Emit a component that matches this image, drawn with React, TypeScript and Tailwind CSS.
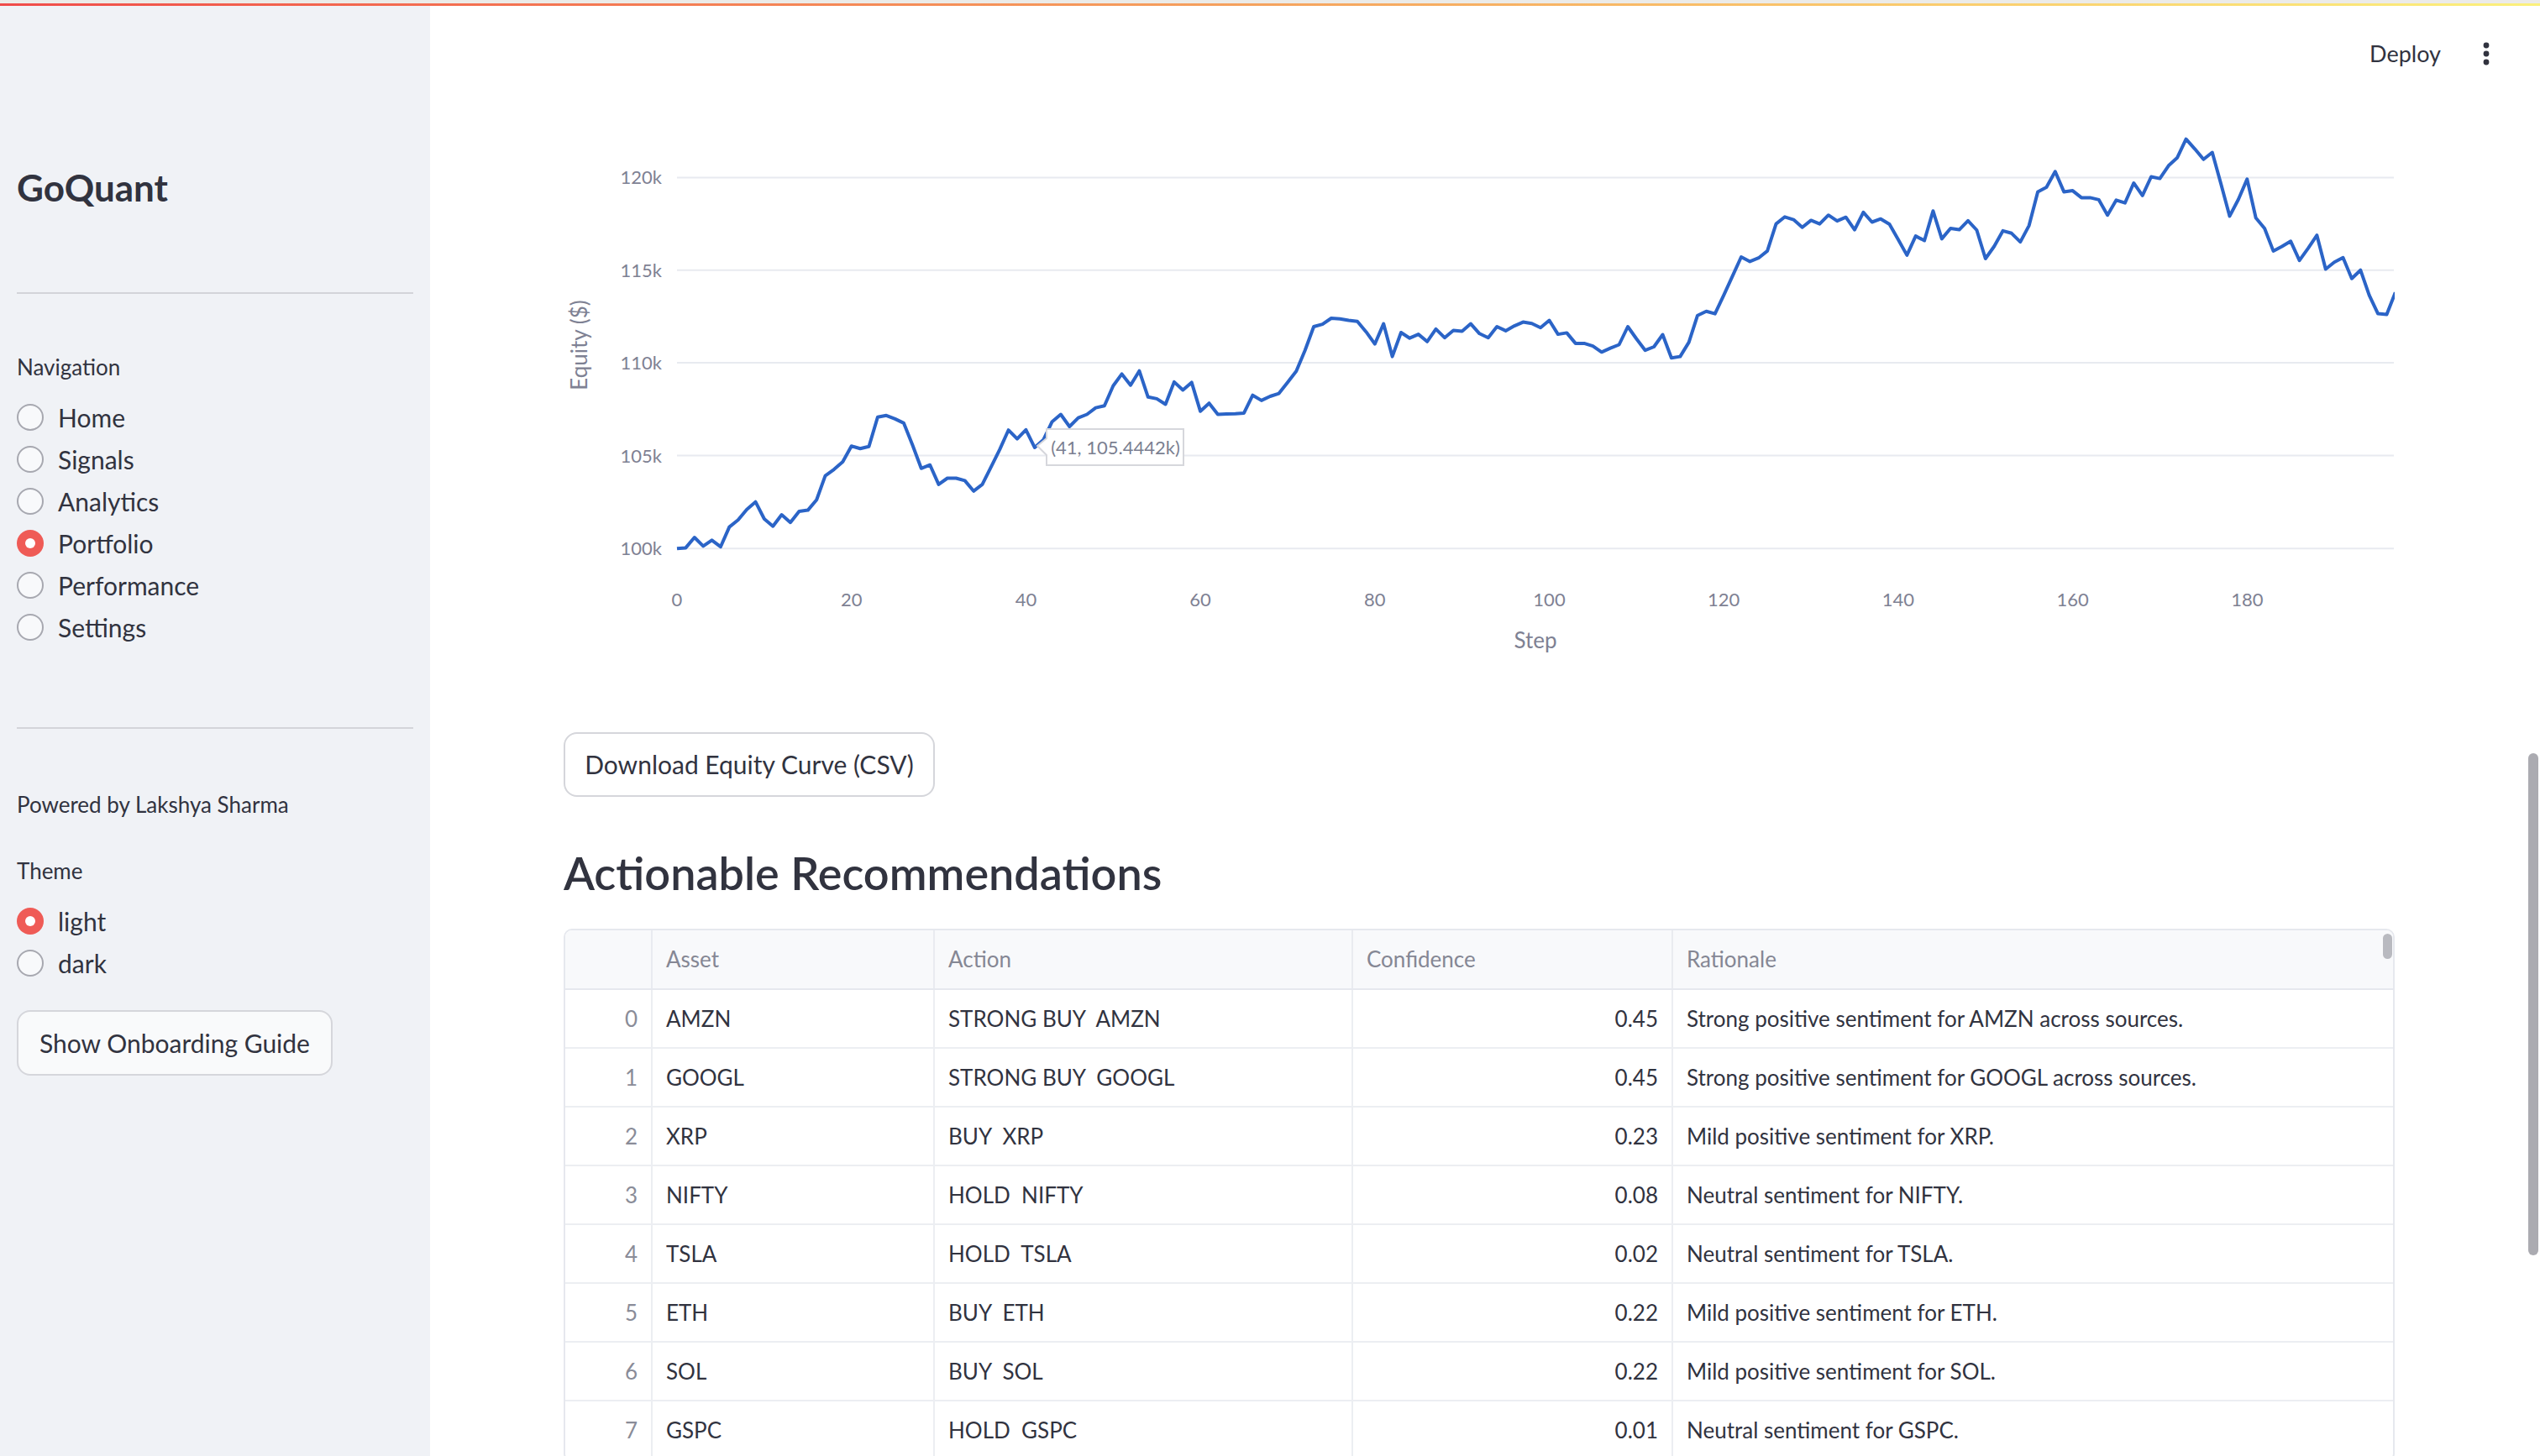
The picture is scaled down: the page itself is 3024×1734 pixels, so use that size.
import React from "react";

const navItems = ["Home", "Signals", "Analytics", "Portfolio", "Performance", "Settings"];

const rows = [
  { asset: "AMZN", action: "STRONG BUY  AMZN", conf: "0.45", why: "Strong positive sentiment for AMZN across sources." },
  { asset: "GOOGL", action: "STRONG BUY  GOOGL", conf: "0.45", why: "Strong positive sentiment for GOOGL across sources." },
  { asset: "XRP", action: "BUY  XRP", conf: "0.23", why: "Mild positive sentiment for XRP." },
  { asset: "NIFTY", action: "HOLD  NIFTY", conf: "0.08", why: "Neutral sentiment for NIFTY." },
  { asset: "TSLA", action: "HOLD  TSLA", conf: "0.02", why: "Neutral sentiment for TSLA." },
  { asset: "ETH", action: "BUY  ETH", conf: "0.22", why: "Mild positive sentiment for ETH." },
  { asset: "SOL", action: "BUY  SOL", conf: "0.22", why: "Mild positive sentiment for SOL." },
  { asset: "GSPC", action: "HOLD  GSPC", conf: "0.01", why: "Neutral sentiment for GSPC." },
];

// equity curve, traced off the plot (pixel rows, 2.41 per page px)
const curve = [
  1237, 1235, 1205, 1230, 1213, 1232, 1175, 1155, 1125, 1103, 1152, 1173, 1140, 1162, 1130, 1127, 1097, 1028, 1010, 988,
  943, 950, 944, 860, 855, 865, 877, 940, 1007, 997, 1053, 1035, 1035, 1042, 1072, 1053, 1003, 953, 897, 922,
  896, 947, 925, 873, 852, 887, 862, 852, 833, 827, 770, 736, 768, 727, 802, 807, 823, 759, 782, 760,
  843, 820, 852, 851, 850, 848, 797, 812, 800, 792, 760, 728, 668, 600, 593, 576, 578, 582, 585, 615,
  650, 592, 686, 617, 633, 622, 643, 607, 632, 611, 613, 592, 620, 632, 600, 612, 598, 587, 591, 603,
  582, 622, 618, 648, 648, 656, 673, 662, 652, 600, 635, 668, 658, 623, 690, 686, 645, 568, 556, 563,
  510, 455, 400, 413, 403, 383, 305, 285, 293, 315, 295, 305, 280, 297, 286, 322, 272, 300, 291, 306,
  350, 395, 340, 353, 268, 348, 318, 322, 296, 323, 405, 370, 325, 332, 357, 310, 213, 200, 155, 213,
  210, 230, 230, 236, 280, 237, 245, 188, 224, 170, 175, 138, 115, 62, 90, 120, 100, 190, 283, 235,
  177, 288, 318, 383, 370, 355, 410, 375, 338, 435, 415, 402, 462, 438, 510, 563, 565, 502,
];

const linePoints = curve.map((p, i) => `${(806 + i * 10.385).toFixed(1)},${(140 + p / 2.41).toFixed(1)}`).join(" ");

const yTicks = [
  { label: "120k", y: 211.4 },
  { label: "115k", y: 321.7 },
  { label: "110k", y: 432.1 },
  { label: "105k", y: 542.5 },
  { label: "100k", y: 653.3 },
];

const xTicks = [0, 20, 40, 60, 80, 100, 120, 140, 160, 180];

function Radio({ label, checked }: { label: string; checked?: boolean }) {
  return (
    <div className="flex h-[50px] items-center gap-[17px]">
      {checked ? (
        <span className="flex h-[32px] w-[32px] items-center justify-center rounded-full bg-[#ef5b56]">
          <span className="h-[12px] w-[12px] rounded-full bg-white" />
        </span>
      ) : (
        <span className="h-[32px] w-[32px] rounded-full border-2 border-[#a7a8b0] bg-[#f8f9fb]" />
      )}
      <span className="text-[30px] leading-[50px]">{label}</span>
    </div>
  );
}

function EquityChart() {
  return (
    <svg width="2180" height="679" viewBox="671 121 2180 679" className="block shrink-0">
      {yTicks.map((t) => (
        <g key={t.label}>
          <line x1="806" x2="2850" y1={t.y} y2={t.y} stroke="#e8eaf0" strokeWidth="2" />
          <text x="788" y={t.y + 8} textAnchor="end" fontSize="22" fill="#7e8193">
            {t.label}
          </text>
        </g>
      ))}
      {xTicks.map((v) => (
        <text key={v} x={806 + v * 10.385} y="722" textAnchor="middle" fontSize="22" fill="#7e8193">
          {v}
        </text>
      ))}
      <text x="1828" y="772" textAnchor="middle" fontSize="26" fill="#7e8193">
        Step
      </text>
      <text x="699" y="411" textAnchor="middle" fontSize="26" fill="#7e8193" transform="rotate(-90 699 411)">
        Equity ($)
      </text>
      <polyline points={linePoints} fill="none" stroke="#2b64c7" strokeWidth="4" strokeLinejoin="round" />
      <path d="M1235,531 L1246,522 V511 H1409 V554 H1246 V542 Z" fill="#ffffff" stroke="#d6d7dc" strokeWidth="2" />
      <text x="1328" y="541" textAnchor="middle" fontSize="22" fill="#7b7f91">
        (41, 105.4442k)
      </text>
    </svg>
  );
}

function RecommendationsTable() {
  const cols = "grid grid-cols-[102px_336px_498px_381px_1fr]";
  return (
    <div className="relative w-[2180px] overflow-hidden rounded-[10px] border-2 border-[#e6e8ee] text-[26px]">
      <div className={`${cols} h-[71px] border-b-2 border-[#e6e8ee] bg-[#f8f9fb] text-[#858794]`}>
        <div />
        <div className="flex items-center border-l-2 border-[#e9ebf0] pl-[16px]">Asset</div>
        <div className="flex items-center border-l-2 border-[#e9ebf0] pl-[16px]">Action</div>
        <div className="flex items-center border-l-2 border-[#e9ebf0] pl-[16px]">Confidence</div>
        <div className="flex items-center border-l-2 border-[#e9ebf0] pl-[16px]">Rationale</div>
      </div>
      {rows.map((r, i) => (
        <div key={r.asset} className={`${cols} h-[70px] border-b-2 border-[#eceef2]`}>
          <div className="flex items-center justify-end pr-[16px] text-[#8a8c98]">{i}</div>
          <div className="flex items-center border-l-2 border-[#eceef2] pl-[16px]">{r.asset}</div>
          <div className="flex items-center whitespace-pre border-l-2 border-[#eceef2] pl-[16px]">{r.action}</div>
          <div className="flex items-center justify-end border-l-2 border-[#eceef2] pr-[16px]">{r.conf}</div>
          <div className="flex items-center border-l-2 border-[#eceef2] pl-[16px]">{r.why}</div>
        </div>
      ))}
      <div className="absolute right-[1px] top-[4px] h-[30px] w-[11px] rounded-full bg-[#b9bac0]" />
    </div>
  );
}

export default function App() {
  return (
    <div className="relative flex h-screen w-full flex-col overflow-hidden bg-white font-['Lato','Noto_Sans',sans-serif] text-[#31333f]">
      <div className="h-[4px] shrink-0 bg-[#ecebe8]" />
      <div className="h-[3px] shrink-0 bg-linear-to-r from-[#f04b49] via-[#f5a35e] to-[#fbf07c]" />

      <div className="flex min-h-0 flex-1">
        <aside className="w-[512px] shrink-0 bg-[#f0f2f6] px-[20px]">
          <h1 className="mt-[186px] text-[44px] font-bold leading-[60px] text-[#31333f]">GoQuant</h1>
          <div className="mt-[95px] h-[2px] bg-[#d3d4d9]" />

          <p className="mt-[67px] text-[26px] leading-[40px]">Navigation</p>
          <div className="mt-[15px]">
            {navItems.map((n) => (
              <Radio key={n} label={n} checked={n === "Portfolio"} />
            ))}
          </div>

          <div className="mt-[94px] h-[2px] bg-[#d3d4d9]" />

          <p className="mt-[70px] text-[26px] leading-[40px]">Powered by Lakshya Sharma</p>
          <p className="mt-[39px] text-[26px] leading-[40px]">Theme</p>
          <div className="mt-[15px]">
            <Radio label="light" checked />
            <Radio label="dark" />
          </div>

          <button
            type="button"
            className="mt-[31px] flex h-[78px] w-[376px] items-center justify-center rounded-[16px] border-2 border-[#d5d6db] bg-[#f9fafb] text-[30px]"
          >
            Show Onboarding Guide
          </button>
        </aside>

        <main className="min-w-0 flex-1 pl-[159px] pr-[173px]">
          <header className="-mr-[173px] flex h-[114px] items-center justify-end gap-[50px] pr-[60px]">
            <span className="text-[27px]">Deploy</span>
            <svg width="8" height="28" viewBox="0 0 8 28">
              <circle cx="4" cy="4" r="3.4" fill="#31333f" />
              <circle cx="4" cy="14" r="3.4" fill="#31333f" />
              <circle cx="4" cy="24" r="3.4" fill="#31333f" />
            </svg>
          </header>

          <EquityChart />

          <button
            type="button"
            className="mt-[72px] flex h-[77px] w-[442px] items-center justify-center rounded-[16px] border-2 border-[#d5d6db] bg-white text-[30px]"
          >
            Download Equity Curve (CSV)
          </button>

          <h2 className="mt-[56px] text-[54px] font-semibold leading-[70px]">Actionable Recommendations</h2>

          <div className="mt-[31px]">
            <RecommendationsTable />
          </div>
        </main>
      </div>

      <div className="absolute left-[3010px] top-[897px] h-[598px] w-[12px] rounded-full bg-[#ababb1]" />
    </div>
  );
}
